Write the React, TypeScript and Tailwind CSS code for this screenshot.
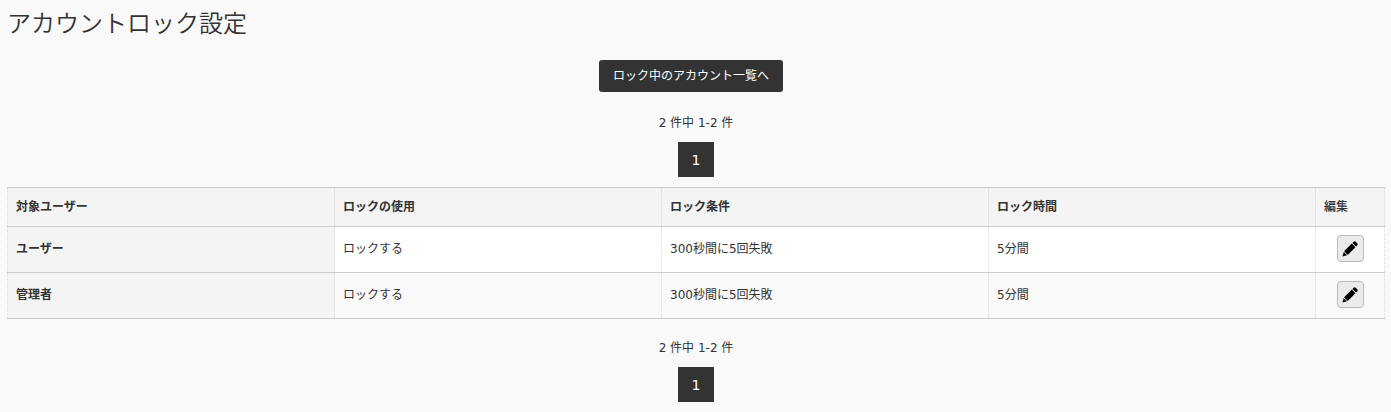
type Rule = {
  target: string;
  usage: string;
  condition: string;
  duration: string;
};

const rules: Rule[] = [
  { target: "ユーザー", usage: "ロックする", condition: "300秒間に5回失敗", duration: "5分間" },
  { target: "管理者", usage: "ロックする", condition: "300秒間に5回失敗", duration: "5分間" },
];

function PencilIcon() {
  return (
    <svg viewBox="0 0 16 16" className="size-4" fill="#000" aria-hidden="true">
      <path d="M10.4 2 11.6.8a1.5 1.5 0 0 1 2.1 0L15.2 2.3a1.5 1.5 0 0 1 0 2.1L14 5.6z" />
      <path d="M9.8 2.6 13.4 6.2 5.7 13.9 2.1 10.3z" />
      <path d="M1.7 10.9 5.1 14.3.5 15.5z" />
    </svg>
  );
}

function Pager() {
  return (
    <nav aria-label="ページ" className="flex flex-col items-center gap-2">
      <p className="leading-[22px]">2 件中 1-2 件</p>
      <a
        href="#page-1"
        aria-current="page"
        className="flex h-[35px] w-9 items-center justify-center bg-[#333333] text-sm text-white"
      >
        1
      </a>
    </nav>
  );
}

const headCell = "border-x border-dotted border-[#d9d9d9] px-2 text-left";
const bodyCell = "border-x border-dotted border-[#d9d9d9] px-2 pb-0.5 text-left";

export default function App() {
  return (
    <main className="min-h-screen bg-[#f9f9f9] pr-1.5 pb-2.5 pl-[7px] font-['DejaVu_Sans','Noto_Sans_CJK_JP',sans-serif] text-xs text-[#333333]">
      <h1 className="font-['Noto_Sans_CJK_JP',sans-serif] text-2xl leading-[43px] font-[350]">
        アカウントロック設定
      </h1>
      <div className="mt-[17px] mb-5 flex justify-center pr-2.5">
        <a
          href="#locked"
          className="flex h-8 items-center rounded-[3px] bg-[#333333] px-3.5 pb-0.5 font-['Noto_Sans_CJK_JP',sans-serif] text-white"
        >
          ロック中のアカウント一覧へ
        </a>
      </div>
      <Pager />
      <table className="mt-2.5 mb-[18px] w-full table-fixed border-collapse">
        <colgroup>
          <col />
          <col />
          <col />
          <col />
          <col className="w-[69px]" />
        </colgroup>
        <thead>
          <tr className="h-[39px] border-y border-[#cccccc] bg-[#f4f4f4]">
            <th scope="col" className={headCell}>対象ユーザー</th>
            <th scope="col" className={headCell}>ロックの使用</th>
            <th scope="col" className={headCell}>ロック条件</th>
            <th scope="col" className={headCell}>ロック時間</th>
            <th scope="col" className={headCell}>
              <span className="font-medium">編集</span>
            </th>
          </tr>
        </thead>
        <tbody>
          {rules.map((rule) => (
            <tr key={rule.target} className="h-[46px] border-y border-[#cccccc] odd:bg-white even:bg-[#f9f9f9]">
              <th scope="row" className={`${bodyCell} bg-[#f4f4f4]`}>{rule.target}</th>
              <td className={bodyCell}>{rule.usage}</td>
              <td className={bodyCell}>{rule.condition}</td>
              <td className={bodyCell}>{rule.duration}</td>
              <td className={bodyCell}>
                <button
                  type="button"
                  aria-label={`${rule.target}を編集`}
                  className="mx-auto flex size-[27px] items-center justify-center rounded-[4px] border border-[#bbbbbb] bg-[#ebebeb]"
                >
                  <PencilIcon />
                </button>
              </td>
            </tr>
          ))}
        </tbody>
      </table>
      <Pager />
    </main>
  );
}
